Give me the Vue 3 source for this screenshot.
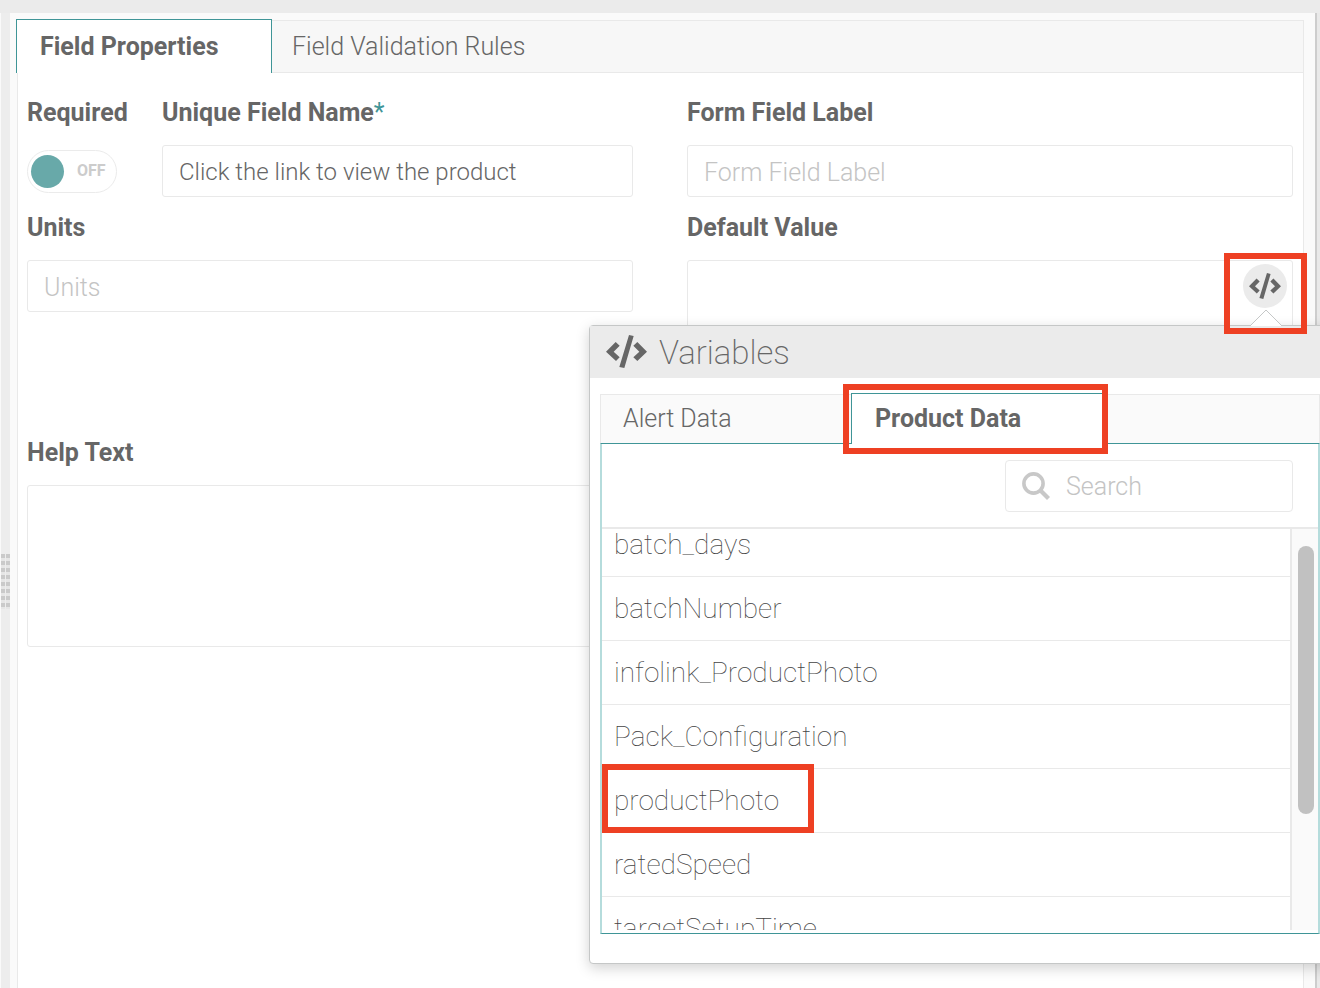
<script setup>
import { ref } from 'vue'

const required = ref(false)
const fieldName = ref('Click the link to view the product')
const fieldLabel = ref('')
const units = ref('')
const defaultValue = ref('')
const helpText = ref('')
const search = ref('')
const variables = [
  'batch_days',
  'batchNumber',
  'infolink_ProductPhoto',
  'Pack_Configuration',
  'productPhoto',
  'ratedSpeed',
  'targetSetupTime'
]
const marked = 'productPhoto'
</script>

<template>
  <div class="page">
    <div class="topbar"></div>
    <div class="body">
      <div class="gutter"><div class="grip"></div></div>
      <main class="panel">
        <section class="box">
          <nav class="tabs">
            <button class="tab active" type="button">Field Properties</button>
            <button class="tab" type="button">Field Validation Rules</button>
          </nav>
          <form class="form" @submit.prevent>
            <div class="pair">
              <div class="field">
                <label for="required">Required</label>
                <div class="toggle-slot">
                  <div class="toggle">
                    <input id="required" v-model="required" type="checkbox" />
                    <span class="state">OFF</span>
                  </div>
                </div>
              </div>
              <div class="field">
                <label for="name">Unique Field Name<span class="star">*</span></label>
                <input id="name" v-model="fieldName" class="text filled" type="text" />
              </div>
            </div>
            <div class="field">
              <label for="label">Form Field Label</label>
              <input id="label" v-model="fieldLabel" class="text" type="text" placeholder="Form Field Label" />
            </div>
            <div class="field">
              <label for="units">Units</label>
              <input id="units" v-model="units" class="text" type="text" placeholder="Units" />
            </div>
            <div class="field">
              <label for="default">Default Value</label>
              <div class="anchor">
                <textarea id="default" v-model="defaultValue" class="text area"></textarea>
                <button class="code" type="button" aria-label="Insert variable">
                  <svg width="32" height="26" viewBox="77 75 123 99" fill="#666">
                    <path d="M77 125 106 96 118 107 100 125 118 142 107 153ZM146 75 160 78 132 174 117 171ZM171 96 200 125 171 153 159 142 177 125 159 107Z" />
                  </svg>
                </button>
                <div class="popover">
                  <header class="pop-head">
                    <svg width="41" height="33" viewBox="77 75 123 99" fill="#666">
                      <path d="M77 125 106 96 118 107 100 125 118 142 107 153ZM146 75 160 78 132 174 117 171ZM171 96 200 125 171 153 159 142 177 125 159 107Z" />
                    </svg>
                    <h2>Variables</h2>
                  </header>
                  <div class="pop-body">
                    <nav class="pop-tabs">
                      <button class="pop-tab" type="button">Alert Data</button>
                      <button class="pop-tab active" type="button">Product Data</button>
                      <span class="mark mark-tab"></span>
                    </nav>
                    <div class="pop-content">
                      <div class="search-row">
                        <label class="search">
                          <svg width="28" height="28" viewBox="0 0 28 28" fill="none" stroke="#c8c8c8">
                            <circle cx="11.5" cy="11.5" r="9.6" stroke-width="3.6" />
                            <path d="M18.5 18.5 26.5 26.5" stroke-width="4.2" />
                          </svg>
                          <input v-model="search" type="text" placeholder="Search" aria-label="Search" />
                        </label>
                      </div>
                      <div class="scroller">
                        <ul class="list">
                          <li v-for="v in variables" :key="v">
                            {{ v }}<span v-if="v === marked" class="mark mark-item"></span>
                          </li>
                        </ul>
                        <div class="track"><div class="thumb"></div></div>
                      </div>
                    </div>
                  </div>
                </div>
                <svg class="arrow" width="34" height="18" viewBox="0 0 34 18">
                  <path d="M1 17 17 1 33 17Z" fill="#fff" />
                  <path d="M1 17 17 1 33 17" fill="none" stroke="#c5c7c7" />
                </svg>
                <span class="mark mark-code"></span>
              </div>
            </div>
            <div class="field">
              <label for="help">Help Text</label>
              <textarea id="help" v-model="helpText" class="text area"></textarea>
            </div>
          </form>
        </section>
      </main>
      <div class="edge"></div>
    </div>
  </div>
</template>

<style>
body {
  margin: 0;
  background: #fff;
}
</style>

<style scoped>
* {
  box-sizing: border-box;
}
.page {
  display: flex;
  flex-direction: column;
  min-height: 100vh;
  overflow: hidden;
  font-family: Roboto, "Liberation Sans", sans-serif;
  font-size: 25px;
  color: #666;
}
button,
input,
textarea {
  font: inherit;
  color: inherit;
  margin: 0;
}
.topbar {
  height: 13px;
  background: #ebebeb;
}
.body {
  flex: 1;
  display: flex;
}
.gutter {
  width: 10px;
  border-left: 1px solid #fafafa;
  background: #ededed;
}
.grip {
  height: 55px;
  margin-top: 541px;
  background:
    linear-gradient(90deg, transparent 4px, #ededed 4px, #ededed 5px, transparent 5px),
    repeating-linear-gradient(#cacaca 0 4px, #e6e6e6 4px 7px);
}
.panel {
  flex: 1;
  display: flex;
  padding: 7px 11px 0 7px;
  background: #fafafa;
}
.edge {
  width: 5px;
  border-left: 2px solid #cdcdcd;
  background: #e9e9e9;
}
.box {
  flex: 1;
  border: 1px solid #e9e9e9;
  border-bottom: 0;
  background: #fff;
}
.tabs {
  display: flex;
  height: 52px;
  background: #f7f7f7;
  border-bottom: 1px solid #e9e9e9;
}
.tab {
  padding: 0 20px 1px;
  border: 0;
  background: none;
  text-align: left;
  font-weight: 300;
}
.tab.active {
  width: 256px;
  margin: -2px 0 -1px -2px;
  padding: 0 23px 1px;
  border: 1px solid #3f9597;
  border-bottom: 0;
  background: #fff;
  font-weight: 700;
}
.form {
  display: grid;
  grid-template-columns: 1fr 1fr;
  gap: 14px 54px;
  padding: 23px 10px 0 9px;
}
.pair {
  display: grid;
  grid-template-columns: 135px 1fr;
}
.field {
  display: flex;
  flex-direction: column;
  gap: 15px;
}
.field > label {
  line-height: 34px;
  font-weight: 700;
}
.star {
  color: #3f9597;
  font-weight: 400;
}
.text {
  width: 100%;
  height: 52px;
  padding: 2px 16px 0;
  border: 1px solid #e9e9e9;
  border-radius: 3px;
  background: #fff;
  font-weight: 300;
}
.filled {
  font-size: 24px;
}
.area {
  display: block;
  height: 162px;
  resize: none;
}
::placeholder {
  color: #c4c4c4;
  opacity: 1;
}
.toggle-slot {
  display: flex;
  align-items: center;
  height: 52px;
}
.toggle {
  display: flex;
  align-items: center;
  gap: 13px;
  width: 90px;
  height: 43px;
  padding: 0 3px;
  border: 1px solid #ebebeb;
  border-radius: 22px;
}
.toggle input {
  appearance: none;
  width: 33px;
  height: 33px;
  border-radius: 50%;
  background: #68a9a9;
}
.state {
  font-size: 16px;
  line-height: 20px;
  font-weight: 700;
  color: #ccc;
}
.anchor {
  position: relative;
}
.code {
  position: absolute;
  top: 4px;
  right: 6px;
  display: flex;
  align-items: center;
  justify-content: center;
  width: 44px;
  height: 44px;
  padding: 0;
  border: 0;
  border-radius: 50%;
  background: #ebebeb;
}
.arrow {
  position: absolute;
  top: 49px;
  right: 10px;
}
.mark {
  position: absolute;
  border: 6px solid #ee4023;
  pointer-events: none;
}
.mark-code {
  top: -7px;
  right: -14px;
  width: 83px;
  height: 81px;
}
.popover {
  position: absolute;
  top: 65px;
  left: -98px;
  right: -41px;
  border: 1px solid #c5c7c7;
  border-radius: 4px;
  background: #fff;
  box-shadow: 0 4px 14px rgba(0, 0, 0, 0.18);
}
.pop-head {
  display: flex;
  align-items: center;
  gap: 12px;
  height: 52px;
  padding: 0 16px 1px;
  background: #ebebeb;
}
h2 {
  margin: 0;
  padding-top: 2px;
  font-size: 33px;
  font-weight: 200;
}
.pop-body {
  padding: 16px 13px 29px 10px;
}
.pop-tabs {
  position: relative;
  display: flex;
  height: 50px;
  border: 1px solid #e9e9e9;
  border-bottom-color: #3f9597;
  background: #fafafa;
}
.pop-tab {
  width: 250px;
  padding: 0 22px 1px;
  border: 0;
  background: none;
  text-align: left;
  font-weight: 300;
}
.pop-tab.active {
  width: 254px;
  margin: -2px 0 -1px;
  padding: 0 23px 1px;
  border: 1px solid #3f9597;
  border-bottom: 0;
  background: #fff;
  font-weight: 700;
}
.mark-tab {
  top: -11px;
  left: 242px;
  width: 265px;
  height: 70px;
}
.pop-content {
  padding-bottom: 3px;
  border: solid #b5dcdc;
  border-width: 0 2px;
  border-bottom: 1px solid #3f9597;
}
.search-row {
  display: flex;
  justify-content: flex-end;
  padding: 16px 25px 15px;
  border-bottom: 2px solid #e9e9e9;
}
.search {
  display: flex;
  align-items: center;
  gap: 16px;
  width: 288px;
  height: 52px;
  padding: 0 16px;
  border: 1px solid #e9e9e9;
  border-radius: 4px;
}
.search svg {
  flex: none;
}
.search input {
  flex: 1;
  min-width: 0;
  padding: 0;
  border: 0;
  outline: 0;
  background: none;
  font-weight: 300;
}
.scroller {
  display: flex;
  height: 401px;
  overflow: hidden;
}
.list {
  flex: 1;
  margin: -16px 0 0;
  padding: 0;
  list-style: none;
}
.list li {
  position: relative;
  height: 64px;
  padding-left: 12px;
  border-bottom: 1px solid #e9e9e9;
  font-size: 28px;
  line-height: 63px;
  font-weight: 100;
  color: #444;
}
.mark-item {
  top: -5px;
  left: 0;
  width: 212px;
  height: 69px;
}
.track {
  width: 28px;
  padding: 17px 4px 0 6px;
  border-left: 2px solid #e9e9e9;
  background: #fafafa;
}
.thumb {
  height: 268px;
  border-radius: 8px;
  background: #c1c1c1;
}
</style>
